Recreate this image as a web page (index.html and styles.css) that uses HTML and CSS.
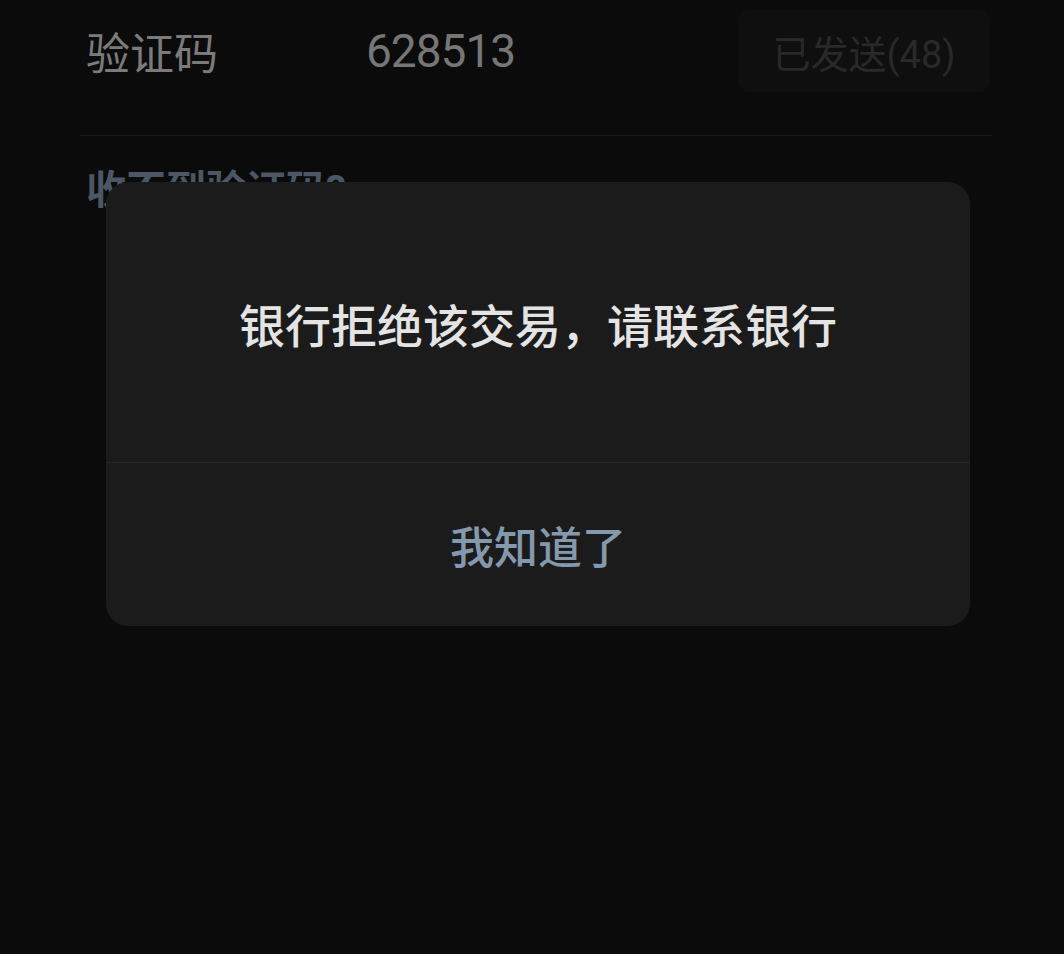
FILE: index.html
```html
<!DOCTYPE html>
<html lang="zh-CN">
<head>
    <meta charset="UTF-8">
    <meta name="viewport" content="width=device-width, initial-scale=1.0">
    <title>验证码</title>
    <link rel="stylesheet" href="styles.css">
</head>
<body>
    <main class="page">
        <section class="code-row">
            <span class="code-label">验证码</span>
            <span class="code-value">628513</span>
            <button class="resend" disabled>已发送(48)</button>
        </section>
        <a class="help-link" href="#">收不到验证码?</a>
    </main>

    <div class="dialog" role="alertdialog">
        <p class="dialog-msg">银行拒绝该交易，请联系银行</p>
        <button class="dialog-btn">我知道了</button>
    </div>
</body>
</html>
```

FILE: styles.css
```css
html, body {
    margin: 0;
    height: 100%;
}
body {
    background: #0b0b0b;
    font-family: Roboto, "Noto Sans CJK SC", sans-serif;
    position: relative;
    overflow: hidden;
}

.page {
    padding: 0 72px 0 80px;
}

.code-row {
    display: flex;
    align-items: center;
    height: 102px;
    padding-bottom: 33px;
    border-bottom: 1px solid #1a1a1a;
}
.code-label {
    width: 280px;
    padding-left: 6px;
    font-size: 44px;
    color: #7b7b7b;
}
.code-value {
    flex: 1;
    font-size: 46px;
    letter-spacing: -1px;
    color: #767676;
}
.resend {
    width: 252px;
    height: 82px;
    margin-right: 2px;
    border: 0;
    border-radius: 12px;
    background: #0f0f0f;
    color: #292929;
    font-family: inherit;
    font-size: 38px;
}

.help-link {
    display: block;
    margin-top: 22px;
    padding-left: 6px;
    font-size: 40px;
    font-weight: 700;
    color: #4c5766;
    text-decoration: none;
}

.dialog {
    position: absolute;
    left: 106px;
    top: 182px;
    width: 864px;
    background: #1b1b1b;
    border-radius: 22px;
    display: flex;
    flex-direction: column;
}
.dialog-msg {
    margin: 0;
    height: 281px;
    padding-top: 2px;
    box-sizing: border-box;
    display: flex;
    align-items: center;
    justify-content: center;
    font-size: 46px;
    font-weight: 500;
    color: #e4e4e4;
    border-bottom: 1px solid #262626;
}
.dialog-btn {
    height: 163px;
    border: 0;
    background: none;
    font-family: inherit;
    font-size: 44px;
    font-weight: 500;
    color: #8599ae;
}
```
